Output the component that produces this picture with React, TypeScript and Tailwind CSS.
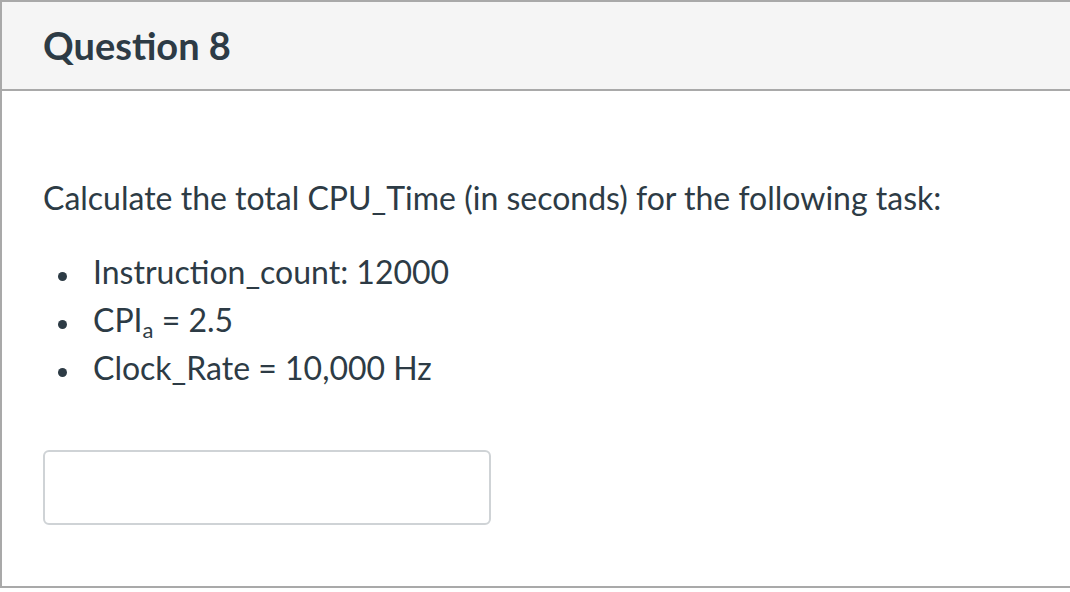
const items = [
  <>Instruction_count: 12000</>,
  <>
    CPI<sub className="text-[22px]">a</sub> = 2.5
  </>,
  <>Clock_Rate = 10,000 Hz</>,
]

export default function App() {
  return (
    <div className="w-[1070px] h-[592px] bg-white" style={{ fontFamily: 'Lato, "Noto Sans", sans-serif' }}>
      <div className="w-[1070px] h-[588px] border-t-2 border-l-2 border-b-2 border-[#a9a9a9] flex flex-col text-[#2d3b45]">
        <div className="h-[89px] bg-[#f5f5f5] border-b-2 border-[#a9a9a9] flex items-center pl-[41px] pb-[2px]">
          <h2 className="text-[38px] font-bold leading-none">Question 8</h2>
        </div>
        <div className="pl-[41px] pt-[83px] text-[32px] leading-[48px]">
          <p>Calculate the total CPU_Time (in seconds) for the following task:</p>
          <ul className="mt-[26px]">
            {items.map((it, i) => (
              <li key={i} className="flex items-start">
                <span className="ml-[15px] mt-[24px] w-[9px] h-[9px] rounded-full bg-[#2d3b45] shrink-0" />
                <span className="ml-[26px]">{it}</span>
              </li>
            ))}
          </ul>
          <input
            type="text"
            className="block mt-[58px] w-[448px] h-[75px] border-2 border-[#cfd3d6] rounded-[6px] bg-white outline-none"
          />
        </div>
      </div>
    </div>
  )
}
